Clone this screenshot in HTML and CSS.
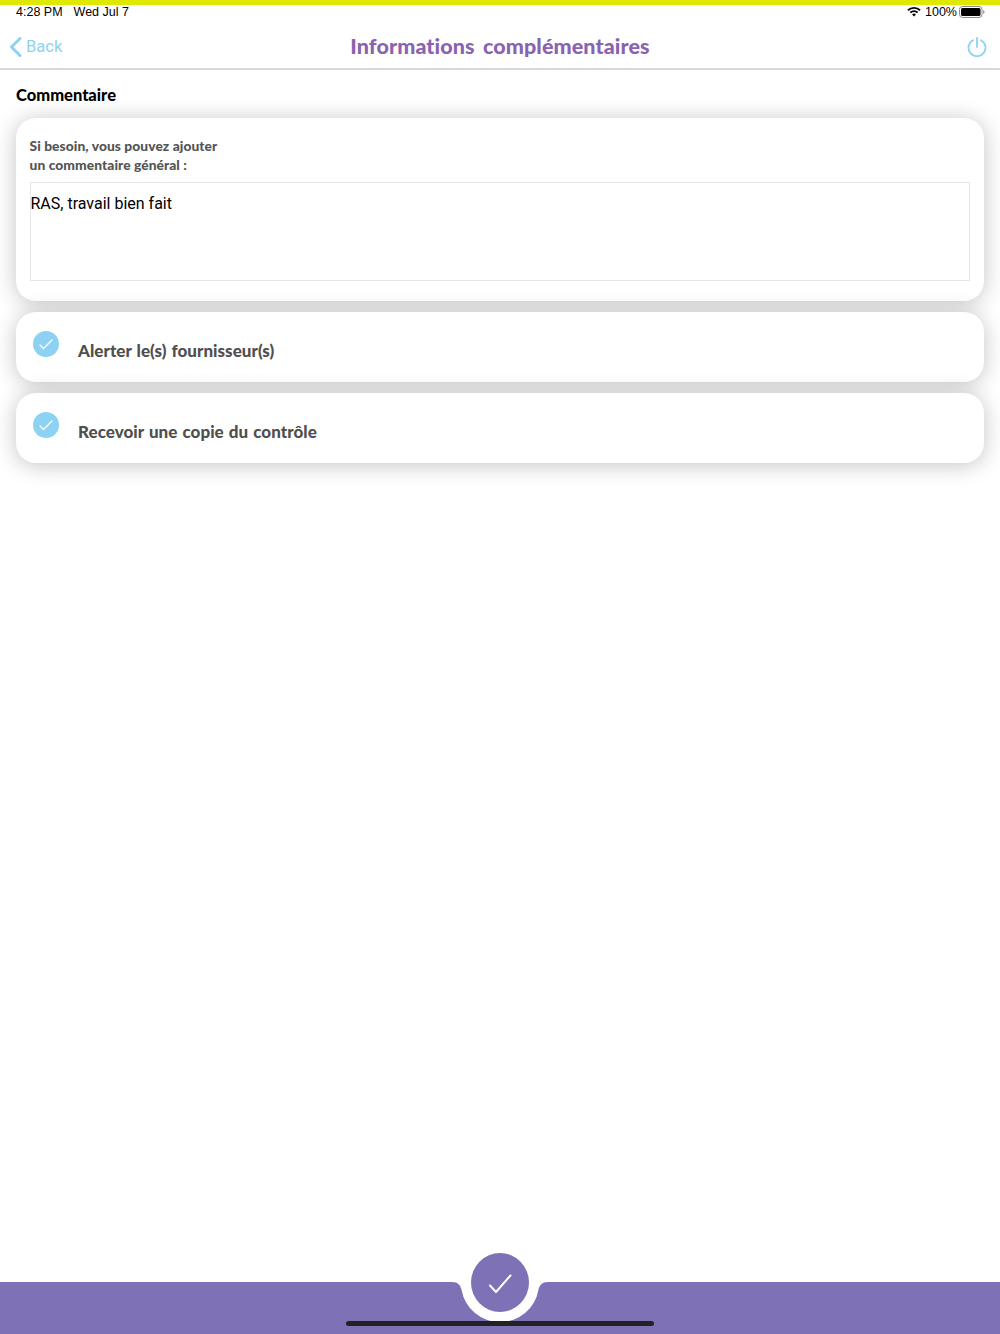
FILE: index.html
```html
<!DOCTYPE html>
<html lang="fr">
<head>
    <meta charset="UTF-8">
    <meta name="viewport" content="width=device-width, initial-scale=1.0">
    <title>Informations complémentaires</title>
    <link rel="stylesheet" href="styles.css">
</head>
<body>
<div class="page">

    <!-- Status bar -->
    <div class="status-bar">
        <span class="status-time">4:28 PM</span>
        <span class="status-date">Wed Jul 7</span>
        <span class="status-right">
            <svg class="wifi" width="14" height="11" viewBox="0 0 14 11">
                <path d="M0.3 3.6A9.6 9.6 0 0 1 13.7 3.6L12.4 5A7.8 7.8 0 0 0 1.6 5Z" fill="#000"/>
                <path d="M2.7 6A6.2 6.2 0 0 1 11.3 6L10 7.3A4.4 4.4 0 0 0 4 7.3Z" fill="#000"/>
                <path d="M5.1 8.4A2.8 2.8 0 0 1 8.9 8.4L7 10.4Z" fill="#000"/>
            </svg>
            <span>100%</span>
            <svg class="battery" width="26" height="12" viewBox="0 0 26 12">
                <rect x="0.5" y="0.5" width="22.5" height="11" rx="3" fill="none" stroke="#8a8a8a"/>
                <rect x="2" y="2" width="19.5" height="8" rx="1.5" fill="#000"/>
                <path d="M24.2 4.2C25.2 4.6 25.5 5.2 25.5 6S25.2 7.4 24.2 7.8Z" fill="#8a8a8a"/>
            </svg>
        </span>
    </div>

    <!-- Navigation -->
    <header class="nav-bar">
        <a class="nav-back">
            <svg width="13" height="20" viewBox="0 0 13 20">
                <path d="M11 1.5L2.5 10L11 18.5" fill="none" stroke="#8ed2f3" stroke-width="3" stroke-linecap="round" stroke-linejoin="round"/>
            </svg>
            <span>Back</span>
        </a>
        <h1 class="nav-title">Informations complémentaires</h1>
        <svg class="nav-power" width="20" height="20" viewBox="0 0 20 20">
            <path d="M6 3.2A8.5 8.5 0 1 0 14 3.2" fill="none" stroke="#8ed2f3" stroke-width="1.8" stroke-linecap="round"/>
            <path d="M10 1V10" fill="none" stroke="#8ed2f3" stroke-width="1.8" stroke-linecap="round"/>
        </svg>
    </header>

    <main class="content">
        <h2 class="section-title">Commentaire</h2>

        <section class="card card-comment">
            <p class="comment-label">Si besoin, vous pouvez ajouter<br>un commentaire général :</p>
            <div class="comment-box">RAS, travail bien fait</div>
        </section>

        <section class="card card-option">
            <span class="check">
                <svg width="14" height="11" viewBox="0 0 14 11">
                    <path d="M1 6L4.5 9.5L13 1" fill="none" stroke="#fff" stroke-width="1.2" stroke-linecap="round" stroke-linejoin="round"/>
                </svg>
            </span>
            <span class="option-label">Alerter le(s) fournisseur(s)</span>
        </section>

        <section class="card card-option">
            <span class="check">
                <svg width="14" height="11" viewBox="0 0 14 11">
                    <path d="M1 6L4.5 9.5L13 1" fill="none" stroke="#fff" stroke-width="1.2" stroke-linecap="round" stroke-linejoin="round"/>
                </svg>
            </span>
            <span class="option-label">Recevoir une copie du contrôle</span>
        </section>
    </main>

    <!-- Bottom bar with the notch for the validate button -->
    <footer class="footer">
        <svg class="footer-notch" width="100" height="40" viewBox="0 0 100 40">
            <path d="M2 0C8 0 10.5 3 11.6 8A39 39 0 0 0 88.4 8C89.5 3 92 0 98 0Z" fill="#fff"/>
        </svg>
        <button class="validate">
            <svg width="24" height="20" viewBox="0 0 24 20">
                <path d="M2 11.5L8 18L22.5 1.5" fill="none" stroke="#fff" stroke-width="2" stroke-linecap="round" stroke-linejoin="round"/>
            </svg>
        </button>
        <div class="home-bar"></div>
    </footer>

</div>
</body>
</html>
```

FILE: styles.css
```css
* {
    box-sizing: border-box;
}

html, body {
    margin: 0;
    padding: 0;
    background: #fff;
}

.page {
    display: flex;
    flex-direction: column;
    width: 1000px;
    height: 1334px;
    overflow: hidden;
    border-top: 5px solid #dfe800;
    font-family: "Liberation Sans", Arial, sans-serif;
}

/* Status bar */
.status-bar {
    display: flex;
    align-items: center;
    height: 14px;
    padding: 0 15px 1px 16px;
    font-size: 12.5px;
    color: #000;
}

.status-date {
    margin-left: 11px;
}

.status-right {
    display: flex;
    align-items: center;
    gap: 4px;
    margin-left: auto;
}

.battery {
    margin-left: -2px;
}

/* Navigation */
.nav-bar {
    display: flex;
    align-items: center;
    justify-content: space-between;
    position: relative;
    height: 51px;
    padding: 6px 13px 0 9px;
    border-bottom: 2px solid #d8d8d8;
}

.nav-back {
    display: flex;
    align-items: center;
    gap: 4px;
    font-family: Roboto, sans-serif;
    font-size: 16.6px;
    color: #8ed2f3;
}

.nav-title {
    position: absolute;
    left: 0;
    right: 0;
    margin: 0 0 2px;
    font-family: Lato, sans-serif;
    font-size: 21.5px;
    font-weight: 900;
    letter-spacing: 0.1px;
    text-align: center;
    word-spacing: 3px;
    color: #8a63b0;
}

/* Content */
.content {
    flex: 1;
    display: flex;
    flex-direction: column;
    gap: 11px;
    padding: 0 16px;
}

.section-title {
    margin: 15px 0 2px;
    font-family: Lato, sans-serif;
    font-size: 16.5px;
    line-height: 20px;
    font-weight: 900;
    color: #000;
}

.card {
    background: #fff;
    border-radius: 20px;
    box-shadow: 0 2px 22px rgba(0, 0, 0, 0.24);
}

.card-comment {
    height: 183px;
    padding: 18px 14px 0 13.5px;
}

.comment-label {
    margin: 0 0 8px;
    font-family: Lato, sans-serif;
    font-size: 13.8px;
    line-height: 19px;
    font-weight: 900;
    letter-spacing: 0.07px;
    color: #555;
}

.comment-box {
    height: 99px;
    padding: 12px 0 0;
    border: 1px solid #e6e6e6;
    font-family: Roboto, sans-serif;
    font-size: 16px;
    line-height: 18px;
    color: #000;
}

.card-option {
    display: flex;
    align-items: flex-start;
    height: 70px;
    padding: 19px 0 0 17px;
}

.check {
    display: flex;
    align-items: center;
    justify-content: center;
    width: 26px;
    height: 26px;
    border-radius: 50%;
    background: #8ed2f3;
}

.option-label {
    margin: 10px 0 0 19px;
    font-family: Lato, sans-serif;
    font-size: 17px;
    line-height: 20px;
    font-weight: 900;
    letter-spacing: 0.03px;
    word-spacing: 1px;
    color: #4f4f4f;
}

/* Footer */
.footer {
    position: relative;
    height: 52px;
    background: #7f71b5;
}

.footer-notch {
    position: absolute;
    left: 450px;
    top: 0;
}

.validate {
    position: absolute;
    left: 471px;
    top: -29px;
    display: flex;
    align-items: center;
    justify-content: center;
    width: 58px;
    height: 59px;
    padding: 2px 0 0;
    border: none;
    border-radius: 50%;
    background: #7f71b5;
}

.home-bar {
    position: absolute;
    left: 346px;
    top: 39px;
    width: 308px;
    height: 5px;
    border-radius: 3px;
    background: #222;
}
```
